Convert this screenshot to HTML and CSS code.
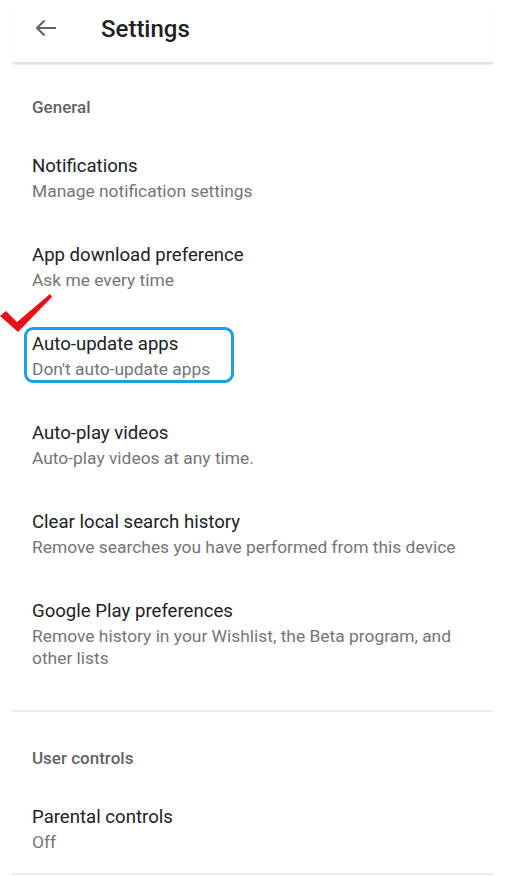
FILE: index.html
```html
<!DOCTYPE html>
<html lang="en">
<head>
    <meta charset="UTF-8">
    <meta name="viewport" content="width=device-width, initial-scale=1.0">
    <title>Settings</title>
    <link rel="stylesheet" href="styles.css">
</head>
<body>

    <div class="page">
        <header class="topbar">
            <a class="back" href="#">
                <svg width="22" height="18" viewBox="0 0 22 18">
                    <path d="M21 9H2M9.5 1.5L2 9l7.5 7.5" fill="none" stroke="#5f6368" stroke-width="2"/>
                </svg>
            </a>
            <h1>Settings</h1>
        </header>

        <section class="group">
            <h2 class="group-title">General</h2>

            <div class="item">
                <div class="item-title">Notifications</div>
                <div class="item-sub">Manage notification settings</div>
            </div>
            <div class="item">
                <div class="item-title">App download preference</div>
                <div class="item-sub">Ask me every time</div>
            </div>
            <div class="item marked">
                <div class="item-title">Auto-update apps</div>
                <div class="item-sub">Don't auto-update apps</div>
                <span class="highlight"></span>
                <svg class="check" width="54" height="40" viewBox="0 0 54 40">
                    <polygon points="0,22 6,17 17,28 50,0 52,3 18,38" fill="#e8111b"/>
                </svg>
            </div>
            <div class="item">
                <div class="item-title">Auto-play videos</div>
                <div class="item-sub">Auto-play videos at any time.</div>
            </div>
            <div class="item">
                <div class="item-title">Clear local search history</div>
                <div class="item-sub">Remove searches you have performed from this device</div>
            </div>
            <div class="item">
                <div class="item-title">Google Play preferences</div>
                <div class="item-sub">Remove history in your Wishlist, the Beta program, and other lists</div>
            </div>
        </section>

        <section class="group">
            <h2 class="group-title next">User controls</h2>

            <div class="item">
                <div class="item-title">Parental controls</div>
                <div class="item-sub">Off</div>
            </div>
        </section>
    </div>

</body>
</html>
```

FILE: styles.css
```css
body {
    font-family: Roboto, "Noto Sans", Arial, sans-serif;
    margin: 0;
    padding: 0;
    background-color: #fff;
    color: #202124;
}
.page {
    margin: 0 32px 0 12px;
}
.topbar {
    display: flex;
    align-items: center;
    height: 62px;
    border-bottom: 2px solid #e3e3e3;
    box-shadow: 0 1px 1px rgba(0, 0, 0, 0.05);
}
.back {
    display: flex;
    margin-left: 23px;
    margin-top: -6px;
}
.topbar h1 {
    margin: -4px 0 0 44px;
    font-size: 24px;
    font-weight: 500;
    color: #202124;
}
.group {
    padding-bottom: 21px;
    border-bottom: 2px solid #ececec;
}
.group:last-child {
    padding-bottom: 0;
}
.group-title {
    margin: 0;
    padding: 33px 20px 16px;
    font-size: 17px;
    line-height: 20px;
    font-weight: 500;
    color: #5f6368;
}
.group-title.next {
    padding-top: 36px;
}
.item {
    position: relative;
    padding: 19px 20px 20px;
}
.item-title {
    font-size: 18.6px;
    line-height: 28px;
    color: #202124;
}
.item-sub {
    font-size: 17.4px;
    line-height: 22px;
    color: #757575;
}
.highlight {
    position: absolute;
    left: 12px;
    top: 16px;
    width: 204px;
    height: 50px;
    border: 3px solid #1aa2e0;
    border-radius: 9px;
}
.check {
    position: absolute;
    left: -12px;
    top: -17px;
}
```
